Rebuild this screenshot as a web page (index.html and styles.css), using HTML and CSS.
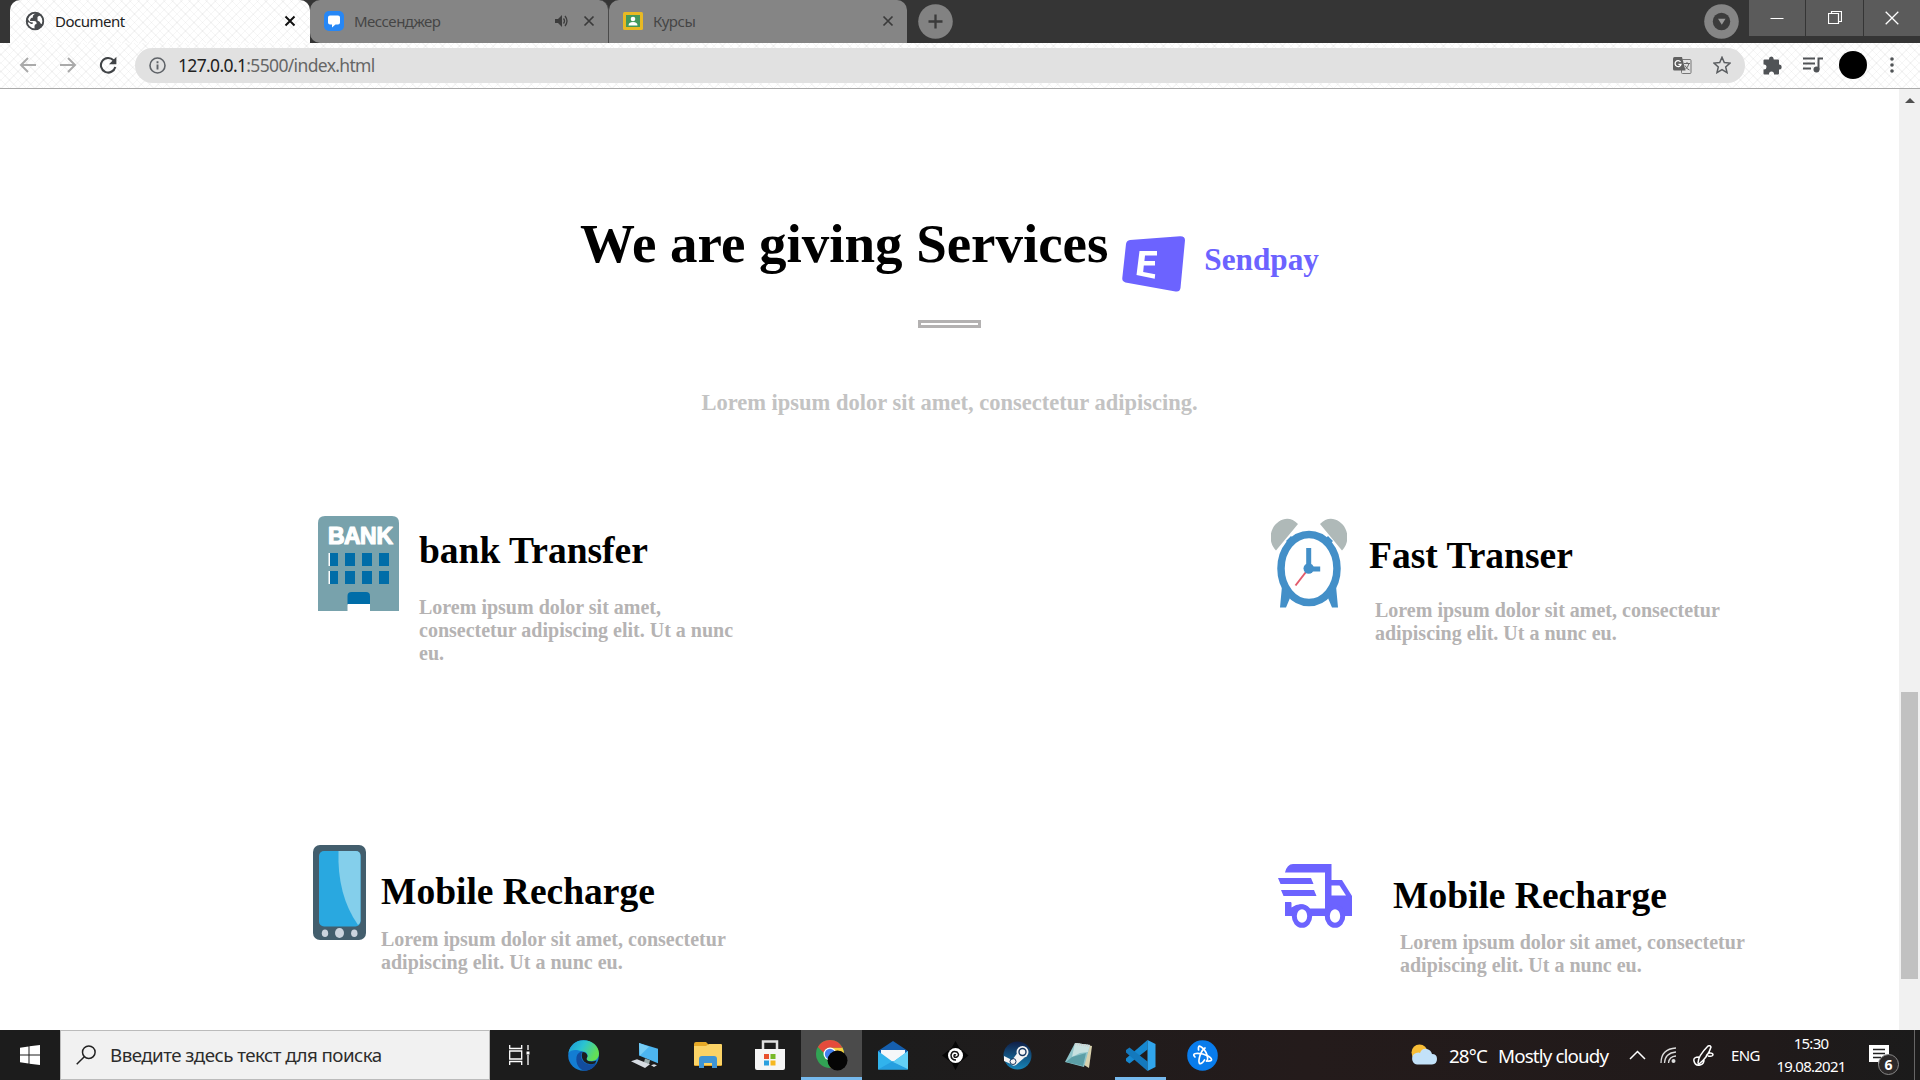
FILE: index.html
```html
<!DOCTYPE html>
<html lang="ru">
<head>
<meta charset="utf-8">
<title>Document</title>
<link rel="stylesheet" href="styles.css">
</head>
<body>
<header class="tabstrip">
  <div class="tab tab-active">
    <svg class="favicon" width="20" height="20" viewBox="0 0 20 20"><circle cx="10" cy="10" r="9" fill="#484b4e"/><path d="M11 2.500Q7 4 8 6.500q-3 0-3 3.500h4q3 0 2.500 3-2 0-2 2v3Q3 17.500 2 11q3 .5 4 2 2 .5 2-1.500-4 0-5-3.500Q5 2.500 11 2.500zM12.500 6q2.500-2 3.500-.5 2 2 2 5-1 3-2 2.500-1-3-3.500-3.500z" fill="#fff"/><circle cx="10" cy="10" r="8.300" fill="none" stroke="#484b4e" stroke-width="1.800"/></svg>
    <span class="tab-title">Document</span>
    <svg class="close" width="12" height="12" viewBox="0 0 12 12"><path d="M1.500 1.500l9 9m0-9l-9 9" stroke="#111" stroke-width="2"/></svg>
  </div>
  <div class="tab tab-second">
    <svg class="favicon" width="20" height="20" viewBox="0 0 20 20"><rect width="20" height="20" rx="5" fill="#2787f5"/><path d="M6 4.500h8q2 0 2 2v5q0 2-2 2h-2.500L8 16.500v-3H6q-2 0-2-2v-5q0-2 2-2z" fill="#fff"/></svg>
    <span class="tab-title">Мессенджер</span>
    <svg class="sound" width="13" height="12" viewBox="0 0 13 12"><path d="M0 4h3l4-4v12L3 8H0z" fill="#3c3c3c"/><path d="M8.500 3.500q2 2.500 0 5M10 1q4 5 0 10" fill="none" stroke="#3c3c3c" stroke-width="1.300"/></svg>
    <svg class="close" width="12" height="12" viewBox="0 0 12 12"><path d="M1.500 1.500l9 9m0-9l-9 9" stroke="#3a3a3a" stroke-width="1.700"/></svg>
  </div>
  <div class="tab tab-third">
    <svg class="favicon" width="20" height="20" viewBox="0 0 20 20"><rect y="1" width="20" height="18" rx="1.500" fill="#e8b923"/><rect x="3" y="4" width="14" height="12" fill="#43985b"/><circle cx="10" cy="8" r="2.300" fill="#fff"/><path d="M5.500 14.500q0-3.500 4.500-3.500t4.500 3.500z" fill="#fff"/></svg>
    <span class="tab-title">Курсы</span>
    <svg class="close" width="12" height="12" viewBox="0 0 12 12"><path d="M1.500 1.500l9 9m0-9l-9 9" stroke="#3a3a3a" stroke-width="1.700"/></svg>
  </div>
  <svg class="newtab" width="35" height="35" viewBox="0 0 35 35"><circle cx="17.500" cy="17.500" r="17.300" fill="#828282"/><path d="M17.500 10.500v14m-7-7h14" stroke="#3b3b3b" stroke-width="2.300"/></svg>
  <svg class="tabsearch" width="35" height="35" viewBox="0 0 35 35"><circle cx="17.500" cy="17.500" r="17.300" fill="#858585"/><circle cx="17.500" cy="17.500" r="8.700" fill="#3c3c3c"/><path d="M14 14.800h7.500l-3.700 6z" fill="#999"/></svg>
  <div class="window-buttons">
    <span class="wbtn"><svg width="14" height="14" viewBox="0 0 14 14"><path d="M.5 7.500h13" stroke="#fff"/></svg></span>
    <span class="wbtn"><svg width="14" height="14" viewBox="0 0 14 14"><path d="M.5 2.500h10v10H.5zM3.500 2V.5h10v10H11" fill="none" stroke="#fff" stroke-width="1.200"/></svg></span>
    <span class="wbtn"><svg width="14" height="14" viewBox="0 0 14 14"><path d="M.7.7l12.600 12.600m0-12.600L.7 13.300" stroke="#fff" stroke-width="1.300"/></svg></span>
  </div>
</header>
<nav class="toolbar">
  <svg class="nav-icon" width="18" height="16" viewBox="0 0 18 16"><path d="M17 8H2m7-7L2 8l7 7" fill="none" stroke="#aaa" stroke-width="2"/></svg>
  <svg class="nav-icon" width="18" height="16" viewBox="0 0 18 16"><path d="M1 8h15M9 1l7 7-7 7" fill="none" stroke="#aaa" stroke-width="2"/></svg>
  <svg class="nav-icon" width="18" height="18" viewBox="0 0 18 18"><path d="M14.500 4.200A7.300 7.300 0 1 0 16.300 11" fill="none" stroke="#404346" stroke-width="2.100"/><path d="M17.400.8v7.400H10z" fill="#404346"/></svg>
  <div class="omnibox">
    <svg width="17" height="17" viewBox="0 0 17 17"><circle cx="8.500" cy="8.500" r="7.500" fill="none" stroke="#5f6368" stroke-width="1.600"/><path d="M8.500 7.500v5M8.500 4.300v2" stroke="#5f6368" stroke-width="1.900"/></svg>
    <span class="url"><b>127.0.0.1</b>:5500/index.html</span>
    <svg class="translate" width="19" height="19" viewBox="0 0 19 19"><rect x="8.500" y="3.500" width="9.500" height="14" rx="1" fill="#e2e2e2" stroke="#777"/><path d="M1.500 1h7.500l3.500 13.500h-11Q0 14.500 0 13V2.500Q0 1 1.500 1z" fill="#606060"/><path d="M7.500 5.800A3 3 0 1 0 8 8.400H5.400" fill="none" stroke="#fff" stroke-width="1.300"/><path d="M11 7.500h6M14 6v1.500m2 0q-1 4-4 6m0-4q2 4 4.500 4.500" fill="none" stroke="#666"/></svg>
    <svg class="star" width="18" height="18" viewBox="0 0 18 18"><path d="M9 1.300l2.300 5.300 5.700.5-4.300 3.800 1.300 5.700L9 13.600l-5 3 1.300-5.700L1 7.100l5.700-.5z" fill="none" stroke="#5a5d60" stroke-width="1.500"/></svg>
  </div>
  <svg class="ext" width="19" height="19" viewBox="0 0 19 19"><path d="M1.500 3.500H6V3q0-2.500 2.300-2.500T10.700 3v.5H15q1 0 1 1v4h.5Q18.700 8.500 18.700 11t-2.200 2.500H16v4q0 1-1 1h-4V18q0-2.600-2.500-2.600T6 18v.5H1.500q-1 0-1-1V13.600H1Q3.500 13.500 3.500 11T1 8.500H.5v-4q0-1 1-1z" fill="#505356"/></svg>
  <svg class="media" width="20" height="16" viewBox="0 0 20 16"><path d="M0 1.500h12M0 6.500h12M0 11.500h8M20 1.500h-4.500v11" fill="none" stroke="#505356" stroke-width="2"/><circle cx="13.500" cy="12.500" r="3" fill="#505356"/></svg>
  <span class="avatar"></span>
  <svg class="dots" width="4" height="16" viewBox="0 0 4 16"><g fill="#505356"><circle cx="2" cy="2" r="1.800"/><circle cx="2" cy="8" r="1.800"/><circle cx="2" cy="14" r="1.800"/></g></svg>
</nav>
<div class="viewport">
  <main class="page">
    <div class="heading">
      <h1>We are giving Services</h1>
      <svg class="logo" width="64" height="56" viewBox="0 0 64 56"><path d="M8 4L58 .2q5-.2 5 4L58.500 52q-.8 4.300-5 3.400L3.500 46.500Q0 45.500.3 42L4 8q.5-3.500 4-4z" fill="#6c63ff"/><path d="M17.500 15H35v4.500H23l-.6 5.500H33v4.500H21.800l-.6 6.500 12 2.200-.5 4.500-18.200-3.700z" fill="#fff"/></svg>
      <span class="brand">Sendpay</span>
    </div>
    <div class="divider"></div>
    <p class="subtitle">Lorem ipsum dolor sit amet, consectetur adipiscing.</p>
    <section class="services">
      <article class="service bank">
        <svg width="81" height="95" viewBox="0 0 81 95"><path d="M7 0h67q7 0 7 7v88H52V82q0-5-5-5H35q-5 0-5 5v13H0V7q0-7 7-7z" fill="#78a2ac"/><path d="M29.500 88V80q0-4 4-4H48q4 0 4 4v8z" fill="#006da8"/><path d="M29.500 88.500H52V95H29.500z" fill="#fff"/><path d="M10.500 37h2v13h-2zM10.500 55h2v13h-2z" fill="#fff"/><path d="M12 37h8v13h-8zM27 37h10v13H27zM44 37h10v13H44zM61 37h10v13H61zM12 55h8v13h-8zM27 55h10v13H27zM44 55h10v13H44zM61 55h10v13H61z" fill="#006da8"/><text x="10 26 42 58.500" y="28" class="bank-sign">BANK</text></svg>
        <div class="copy"><h2>bank Transfer</h2><p>Lorem ipsum dolor sit amet, consectetur adipiscing elit. Ut a nunc eu.</p></div>
      </article>
      <article class="service clock">
        <svg width="76" height="90" viewBox="0 0 76 90"><path d="M5 32.500A17.500 18.500 0 0 1 12 1.500Q20-1 27 6zM71 32.500A17.500 18.500 0 0 0 64 1.500Q56-1 49 6z" fill="#afb9b8"/><path d="M15 23l5-5 5 5-5 5zM52 23l5-5 5 5-5 5zM11 68l8 12-4 9.500H9zM65 68l-8 12 4 9.500h6z" fill="#438fc8"/><ellipse cx="38" cy="50.500" rx="28" ry="34" fill="#fff" stroke="#438fc8" stroke-width="7.500"/><path d="M38 50L24.500 67.500" stroke="#e35b6c" stroke-width="2"/><path d="M37.700 30v21h11.500" fill="none" stroke="#438fc8" stroke-width="5"/><circle cx="37.700" cy="50.500" r="5.200" fill="#438fc8"/></svg>
        <div class="copy"><h2>Fast Transer</h2><p>Lorem ipsum dolor sit amet, consectetur adipiscing elit. Ut a nunc eu.</p></div>
      </article>
      <article class="service phone">
        <svg width="53" height="95" viewBox="0 0 53 95"><rect width="53" height="95" rx="7" fill="#435e6d"/><rect x="6" y="6" width="41.500" height="75.500" rx="5" fill="#29a8e0"/><path d="M25.500 6h17q5 0 5 5v65q0 2-2.500 4Q24 50 25.500 6z" fill="#84cfeb"/><g fill="#cbd4de"><ellipse cx="12" cy="88.300" rx="3.200" ry="3.800"/><ellipse cx="26.500" cy="88" rx="4.500" ry="5"/><ellipse cx="41.300" cy="88.300" rx="3.200" ry="3.800"/></g></svg>
        <div class="copy"><h2>Mobile Recharge</h2><p>Lorem ipsum dolor sit amet, consectetur adipiscing elit. Ut a nunc eu.</p></div>
      </article>
      <article class="service truck">
        <svg width="74" height="64" viewBox="0 0 74 64"><path d="M7 8.500Q9 0 15 0h38.500v16H64l10 16v20h-7a10 10 0 0 1-20 0H33.500a10 10 0 0 1-19.500 0H7V38.500h6.500v5q10-7 18 1H47V8.500z" fill="#6c63ff"/><path d="M0 14h33l2.500 6H2.500zM3 26h33l2.500 6H5.500zM7 38h6v14H7z" fill="#6c63ff"/><path d="M53.500 21.500h8l6.500 10H53.500z" fill="#fff"/><ellipse cx="24" cy="52" rx="7.700" ry="9.300" fill="#fff" stroke="#6c63ff" stroke-width="5"/><ellipse cx="57" cy="52" rx="7.700" ry="9.300" fill="#fff" stroke="#6c63ff" stroke-width="5"/></svg>
        <div class="copy"><h2>Mobile Recharge</h2><p>Lorem ipsum dolor sit amet, consectetur adipiscing elit. Ut a nunc eu.</p></div>
      </article>
    </section>
  </main>
  <div class="scrollbar">
    <svg width="10" height="5" viewBox="0 0 10 5"><path d="M0 5l5-5 5 5z" fill="#505050"/></svg>
    <span class="thumb"></span>
    <svg width="10" height="5" viewBox="0 0 10 5"><path d="M0 0l5 5 5-5z" fill="#505050"/></svg>
  </div>
</div>
<footer class="taskbar">
  <span class="start"><svg width="20" height="20" viewBox="0 0 20 20"><path d="M0 2.800L8.500 1.500v8H0zM9.500 1.300L20 0v9.500H9.500zM0 10.500h8.500v8L0 17.200zM9.500 10.500H20V20L9.500 18.700z" fill="#fff"/></svg></span>
  <div class="search"><svg width="20" height="20" viewBox="0 0 20 20"><circle cx="12.800" cy="7.200" r="6.300" fill="none" stroke="#222" stroke-width="1.500"/><path d="M8.300 11.700L.7 19.300" stroke="#222" stroke-width="1.500"/></svg><span>Введите здесь текст для поиска</span></div>
  <span class="app taskview"><svg width="21" height="20" viewBox="0 0 21 20"><path d="M.7 0v3.500h12V0M.7 20v-3.500h12V20M.7 6h12v8H.7zM19 0v5M19 10v10" fill="none" stroke="#fff" stroke-width="1.300"/><path d="M17.500 6.500h3v3h-3z" fill="#fff"/></svg></span>
  <span class="app"><svg width="31" height="31" viewBox="0 0 31 31"><defs><linearGradient id="e" x1="0" y1="0" x2="1" y2=".4"><stop offset="0" stop-color="#1b95d8"/><stop offset=".5" stop-color="#2bc3d2"/><stop offset="1" stop-color="#63df55"/></linearGradient></defs><circle cx="15.500" cy="15.500" r="15.300" fill="#137dd2"/><path d="M.5 13C2 5 8 .3 15.500.3 24 .3 31 6 31 13.500c0 5-3.500 7.500-8 7.500-4 0-5-1.500-4-3 2-3-.5-6.500-4-6.500C9 9.500 3 9 .5 13z" fill="url(#e)"/><path d="M8.500 17q1-5 6-5.500c-4 6 1 13 8 13 3 0 5-1 6.500-2C25 30 19 31 16 30.800 11 29 7.500 24 8.500 17z" fill="#124c9e"/><path d="M14.500 12q4 0 5 4l-1 3q.5 2.500 5 2.500 3 0 5-1l-1.500 3q-7 2-11-2-3.500-4-1.500-9.500z" fill="#1d1d1d"/></svg></span>
  <span class="app"><svg width="29" height="27" viewBox="0 0 29 28" preserveAspectRatio="none"><path d="M8 1l19 6v15L8 14z" fill="#4db5ef"/><path d="M8 1l10 4L9 14z" fill="#78cdf5"/><path d="M14 17l5 2-1 4-5-2z" fill="#9aa"/><path d="M0 20l6-2 13 5-5 4zM20 24l3-1 3 1-3 2z" fill="#d7dce2"/></svg></span>
  <span class="app"><svg width="28" height="26" viewBox="0 0 28 26"><path d="M0 2q0-2 2-2h10l3 3H28v20q0 1-1 1H1q-1 0-1-1z" fill="#e6a927"/><path d="M0 4h12l3-2h12q1 0 1 1v20H0z" fill="#fbd366"/><path d="M5 26V17q0-3 3-3h12q3 0 3 3v9h-5v-5h-8v5z" fill="#3f95d5"/></svg></span>
  <span class="app"><svg width="30" height="31" viewBox="0 0 30 31"><path d="M8 11V1.500h14V11" fill="none" stroke="#e1e1e1" stroke-width="2.500"/><path d="M0 9h30v19q0 2-2 2H2q-2 0-2-2z" fill="#f6f6f6"/><path d="M9 14h5v5H9z" fill="#e9512e"/><path d="M15.500 14h5v5h-5z" fill="#78b928"/><path d="M9 20.500h5v5H9z" fill="#2ba0df"/><path d="M15.500 20.500h5v5h-5z" fill="#f6b821"/></svg></span>
  <span class="app app-active"><svg width="32" height="32" viewBox="0 0 32 32"><circle cx="14" cy="15" r="14" fill="#31a354"/><path d="M14 8.500h12.400A14 14 0 0 1 14 29l6-11z" fill="#f8cf42"/><path d="M1.900 8A14 14 0 0 1 26.500 8.700H14q-5 0-6.300 5z" fill="#e54b3c"/><circle cx="14" cy="15" r="6.500" fill="#fff"/><circle cx="14" cy="15" r="5.200" fill="#4281ee"/><circle cx="21.500" cy="21.500" r="10" fill="#050505"/></svg></span>
  <span class="app"><svg width="30" height="29" viewBox="0 0 30 29"><path d="M0 10L15 0l15 10v18H0z" fill="#155fae"/><path d="M3 9h24v12H3z" fill="#f5f7f9"/><path d="M0 10l15 11L30 10v18.500H0z" fill="#31b3ec"/><path d="M15 20l15 8.500H0z" fill="#259fe0"/><path d="M30 10v18L15 21z" fill="#63d0f6"/></svg></span>
  <span class="app"><svg width="27" height="29" viewBox="0 0 27 29"><path d="M13.500 0l4 7 9 7.500-9 7-4 7.500-4-7.500-9.500-7 9.500-7.500z" fill="#050505"/><circle cx="13.500" cy="14.500" r="7.500" fill="#fff"/><path d="M14 14q-2-1-2 1t3 1q3-2 0-5-5-2-6 3 0 5 5 5" fill="none" stroke="#111" stroke-width="1.500"/></svg></span>
  <span class="app"><svg width="29" height="29" viewBox="0 0 29 29"><defs><linearGradient id="s" x2="0" y2="1"><stop offset="0" stop-color="#101e46"/><stop offset="1" stop-color="#1685b8"/></linearGradient></defs><circle cx="14.500" cy="14.500" r="14" fill="url(#s)"/><path d="M1 15l8 4 7-9 5 7-8 7q-3 2-5-1L1 20z" fill="#f4f4f4"/><circle cx="19.500" cy="11" r="6" fill="#f4f4f4"/><circle cx="19.500" cy="11" r="3.500" fill="#f4f4f4" stroke="#17375f" stroke-width="1.400"/><circle cx="10" cy="20.500" r="3" fill="none" stroke="#17375f"/></svg></span>
  <span class="app"><svg width="28" height="27" viewBox="0 0 28 27"><path d="M11 1l16 3-3 22-5-3z" fill="#d8d1ae"/><path d="M10 1l15 2-6 22-19-5z" fill="#8ec4ca"/><path d="M10 1l15 2-2 7-8 1-8 4z" fill="#c7e1e0"/><path d="M7 15l14-4-3 13-17-4z" fill="#5c9fa7"/><path d="M10 2l15 2" stroke="#ccc" stroke-width="2" stroke-dasharray="1 1"/></svg></span>
  <span class="app app-open"><svg width="31" height="31" viewBox="0 0 31 31"><path d="M22.500 0v9.500L4.500 23.500 1 21v-2.500z" fill="#1688d0"/><path d="M22.500 31v-9.500L4.500 7.500 1 10v2.500z" fill="#1479bd"/><path d="M22.500 0l8 4v23l-8 4z" fill="#30a5ec"/></svg></span>
  <span class="app"><svg width="31" height="31" viewBox="0 0 31 31"><circle cx="15.500" cy="15.500" r="15.300" fill="#087cec"/><g fill="none" stroke="#fff" stroke-width="1.700" stroke-linecap="round" stroke-linejoin="round"><path d="M8 17q-3-3 1-3.500 6-.5 12 2.500 5 3 3 4.500-1 .7-4 .5"/><path d="M11.500 10Q11 5 13.500 6.500 18 9 20 15q1.500 5-.5 6"/><path d="M18 8q-3 2-4.500 6-2.500 7-1 9.500 2 1 5-3.500"/></g></svg></span>
  <div class="tray">
    <svg class="weather" width="26" height="21" viewBox="0 0 26 21"><circle cx="8.500" cy="8.500" r="8" fill="#f8bd36"/><path d="M6 20.500a6 6 0 0 1-1-11.500Q8 8 9 9q2-5 7-4 4 1 5 5 5 0 5 5t-5 5.500z" fill="#c3e2f9"/></svg>
    <span class="temp">28°C</span><span class="cond">Mostly cloudy</span>
    <svg class="chev" width="17" height="10" viewBox="0 0 17 10"><path d="M1 9l7.500-7.500L16 9" fill="none" stroke="#fff" stroke-width="1.500"/></svg>
    <svg class="wifi" width="16" height="16" viewBox="0 0 16 16"><path d="M1 16Q1 2 16 1M4.500 16Q5 6 16 5M8.500 16Q9 9.500 16 9" fill="none" stroke="#ddd" stroke-width="1.300"/><circle cx="13.500" cy="14" r="2" fill="#ddd"/></svg>
    <svg class="pen" width="21" height="21" viewBox="0 0 21 21"><path d="M5 18Q5 11 15 1q2-1 3 1-3 10-12 17zM6 12q-6 0-5 4 1 5 6 4 4-1 4-5M13 12q1-4 4-4 3 0 3 2-1 2-5 1" fill="none" stroke="#fff" stroke-width="1.500"/></svg>
    <span class="lang">ENG</span>
    <div class="datetime"><span class="time">15:30</span><span class="date">19.08.2021</span></div>
    <div class="notice"><svg width="20" height="20" viewBox="0 0 20 20"><path d="M0 0h20v17h-7l-4 3v-3H0z" fill="#fff"/><path d="M4 4.500h12M4 8.500h12M4 12.500h8" stroke="#222" stroke-width="1.400"/></svg><span class="badge">6</span></div>
    <span class="show-desktop"></span>
  </div>
</footer>
</body>
</html>
```
FILE: styles.css
```css
* { box-sizing: border-box; }
body {
  margin: 0;
  width: 1920px;
  height: 1080px;
  overflow: hidden;
  display: grid;
  grid-template-rows: 43px 46px 941px 50px;
  background: #fff;
  font-family: "Noto Sans", "Open Sans", sans-serif;
}
svg { display: block; flex: none; }
h1, h2, p { margin: 0; }

.tabstrip { display: flex; background: #353535; padding-left: 10px; }
.tab { display: flex; align-items: center; height: 43px; font-size: 15px; white-space: nowrap; }
.tab-active, .toolbar {
  background-color: #fff;
  background-image:
    repeating-linear-gradient(45deg, rgba(0,0,0,.035) 0 1px, transparent 1px 6px),
    repeating-linear-gradient(-45deg, rgba(0,0,0,.035) 0 1px, transparent 1px 6px);
}
.tab-active { width: 300px; padding: 0 14px 2px 15px; border-radius: 10px 10px 0 0; color: #222; }
.tab-second, .tab-third { background: #858585; color: #454545; padding-bottom: 2px; }
.tab-second { width: 299px; padding-left: 14px; padding-right: 13px; border-radius: 10px 10px 0 10px; border-right: 1px solid #4a4a4a; }
.tab-third { width: 298px; padding-left: 14px; padding-right: 13px; border-radius: 10px 10px 0 0; }
.tab-title { margin-left: 10px; letter-spacing: -.5px; }
.close { margin-left: auto; }
.sound { margin-left: auto; margin-right: 15px; }
.sound + .close { margin-left: 0; }
.newtab { margin: 4px 0 0 11px; }
.tabsearch { margin: 4px 0 0 auto; }
.window-buttons { display: flex; gap: 1px; height: 36px; margin-left: 10px; }
.wbtn { width: 57px; display: flex; align-items: center; justify-content: center; background: #5b5b5b; }
.wbtn:first-child { width: 56px; }
.wbtn:last-child { width: 56px; }

.toolbar { display: flex; align-items: center; padding: 0 26px 1px 19px; border-bottom: 1px solid #aaa; }
.nav-icon { margin-right: 22px; }
.nav-icon:nth-child(3) { margin-right: 18px; }
.omnibox { display: flex; align-items: center; width: 1610px; height: 35px; border-radius: 18px; background: #e1e1e1; padding: 0 14px 0 14px; }
.url { margin: -1px 0 0 12px; font-size: 17.5px; letter-spacing: -.65px; color: #666; }
.url b { font-weight: 400; color: #222; }
.translate { margin-left: auto; }
.star { margin-left: 21px; }
.ext { margin-left: 18px; }
.media { margin-left: 21px; }
.avatar { width: 28px; height: 28px; border-radius: 50%; background: #000; margin-left: 16px; }
.dots { margin-left: auto; }

.viewport { display: grid; grid-template-columns: 1899px 21px; }
.page { padding-top: 124px; font-family: "Liberation Serif", serif; font-weight: 700; }
.heading { display: flex; justify-content: center; height: 80px; }
h1 { font-size: 55px; line-height: 62px; letter-spacing: -.04px; }
.logo { margin: 23px 18px 0 14px; }
.brand { margin-top: 29px; font-size: 31.25px; line-height: 36px; color: #6c63ff; }
.divider { width: 63px; height: 8px; border: 3px solid #b3b1b1; margin: 27px auto 0; }
.subtitle { margin-top: 62px; text-align: center; font-size: 22.5px; line-height: 26px; color: #c3c3c3; }
.services { display: grid; grid-template-columns: 958px 1fr; grid-template-rows: 329px 200px; margin-top: 100px; padding-left: 313px; }
.service { display: flex; align-items: flex-start; }
h2 { font-size: 37.5px; line-height: 42px; }
.copy p { font-size: 20px; line-height: 23px; color: #b5b3b3; }
.bank { padding-left: 5px; }
.bank .copy { width: 320px; padding: 14px 0 0; margin-left: 20px; }
.bank p { margin-top: 24px; }
.bank-sign { font: 700 23px "Liberation Sans Narrow", "Liberation Sans", sans-serif; fill: #fff; stroke: #fff; stroke-width: 1.2px; stroke-linejoin: round; }
.clock { padding-top: 2px; }
.clock .copy { width: 358px; padding-top: 17px; margin-left: 22px; }
.clock p { margin: 22px 0 0 6px; }
.phone .copy { width: 355px; padding-top: 26px; margin-left: 15px; }
.phone p { margin-top: 15px; }
.truck { padding: 19px 0 0 7px; }
.truck .copy { width: 365px; padding-top: 11px; margin-left: 41px; }
.truck p { margin: 14px 0 0 7px; }
.scrollbar { display: flex; flex-direction: column; align-items: center; background: #f1f1f1; padding: 9px 0 8px; }
.thumb { width: 17px; height: 287px; margin: 589px 0 auto; background: #c1c1c1; }

.taskbar { display: flex; align-items: stretch; background: linear-gradient(90deg, #1c1c1c 0 45%, #241b1b 68%, #201a1a 92%, #1b1b1b); color: #fff; }
.start { width: 60px; display: flex; align-items: center; justify-content: center; }
.search { width: 430px; display: flex; align-items: center; gap: 14px; padding: 0 0 0 15px; background: #f1f1f1; border: 1px solid #bbb; color: #2c2c2c; font-size: 18.75px; letter-spacing: -.55px; white-space: nowrap; }
.search span { margin-top: -2px; }
.app { width: 61.9px; display: flex; align-items: center; justify-content: center; }
.taskview { width: 63px; padding-right: 4px; }
.app-active { background: #4b4b4b; box-shadow: inset 0 -3px #76b9ed; }
.app-open { background: linear-gradient(#76b9ed, #76b9ed) center bottom / 51px 3px no-repeat; }
.tray { display: flex; align-items: center; margin-left: auto; white-space: nowrap; }
.weather { margin-top: -2px; }
.temp, .cond { font-size: 18.75px; letter-spacing: -.85px; }
.temp { margin-left: 12px; width: 49px; }
.cond { width: 110px; }
.chev { margin-left: 21px; }
.wifi { margin-left: 14px; }
.pen { margin-left: 17px; }
.lang { width: 30px; margin-left: 17px; font-size: 15px; letter-spacing: -.6px; }
.datetime { width: 90px; margin-left: 5px; display: flex; flex-direction: column; align-items: center; font-size: 15px; line-height: 23px; letter-spacing: -.75px; }
.notice { position: relative; width: 45px; height: 50px; padding: 15px 0 0 13px; }
.badge { position: absolute; left: 22px; top: 24px; width: 21px; height: 21px; border: 1px solid #888; border-radius: 50%; background: #2c2929; font-size: 14px; line-height: 19px; text-align: center; font-weight: 700; }
.show-desktop { width: 6px; height: 50px; margin-left: 13px; border-left: 1px solid #666; }
```
